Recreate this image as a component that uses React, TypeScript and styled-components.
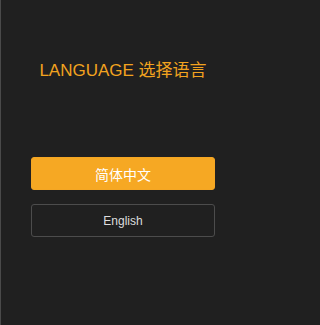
import React from 'react';
import styled, { createGlobalStyle } from 'styled-components';

const GlobalStyle = createGlobalStyle`
  html, body {
    margin: 0;
    padding: 0;
    background: #202020;
  }
`;

const Page = styled.main`
  box-sizing: border-box;
  width: 243px;
  height: 325px;
  background: #202020;
  border-left: 1px solid #4a4a4a;
  font-family: 'Liberation Sans', Arial, 'Noto Sans CJK SC', sans-serif;
  display: flex;
  flex-direction: column;
  align-items: center;
  padding-top: 60px;
`;

const Title = styled.h1`
  margin: 0;
  font-size: 17px;
  font-weight: normal;
  line-height: 22px;
  color: #f2a31f;
  padding-left: 2px;
`;

const Buttons = styled.div`
  display: flex;
  flex-direction: column;
  gap: 14px;
  margin-top: 75px;
  margin-left: 2px;
`;

const LangButton = styled.button<{ $primary?: boolean }>`
  box-sizing: border-box;
  width: 184px;
  height: 33px;
  border-radius: 3px;
  font-family: inherit;
  cursor: pointer;
  border: 1px solid ${(p) => (p.$primary ? '#f5a623' : '#4c4c4c')};
  background: ${(p) => (p.$primary ? '#f6a823' : 'transparent')};
  color: ${(p) => (p.$primary ? '#ffffff' : '#dddddd')};
  font-size: ${(p) => (p.$primary ? '14px' : '12px')};
`;

export default function App() {
  return (
    <>
      <GlobalStyle />
      <Page>
        <Title>LANGUAGE 选择语言</Title>
        <Buttons>
          <LangButton $primary>简体中文</LangButton>
          <LangButton>English</LangButton>
        </Buttons>
      </Page>
    </>
  );
}
